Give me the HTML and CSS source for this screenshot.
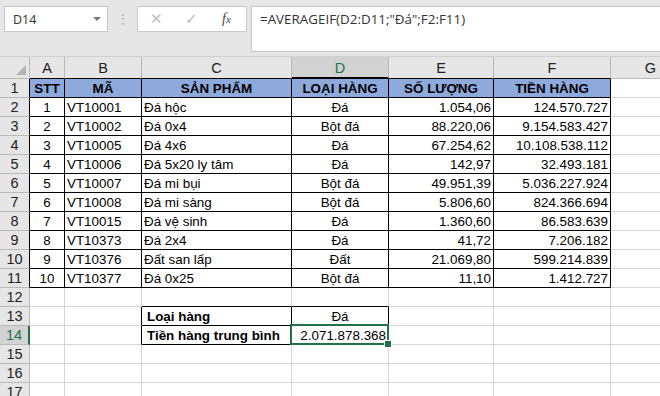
FILE: index.html
```html
<!DOCTYPE html>
<html lang="vi">
<head>
    <meta charset="UTF-8">
    <title>AVERAGEIF</title>
    <link rel="stylesheet" href="styles.css">
</head>
<body>
    <div class="formula-area">
        <div class="name-box">
            <span>D14</span>
            <span class="drop"></span>
        </div>
        <div class="grip">⋮</div>
        <div class="fx-box">
            <span class="btn">✕</span>
            <span class="btn">✓</span>
            <span class="fx"><i>f</i><i class="x">x</i></span>
        </div>
        <div class="formula-input">=AVERAGEIF(D2:D11;"Đá";F2:F11)</div>
    </div>

    <div class="sheet">
        <div class="row col-head">
            <div class="rh corner"><span class="tri"></span></div>
            <div class="c col-a edge">A</div>
            <div class="c col-b edge">B</div>
            <div class="c col-c edge">C</div>
            <div class="c col-d edge active">D</div>
            <div class="c col-e edge">E</div>
            <div class="c col-f edge">F</div>
            <div class="c col-g">G</div>
        </div>

        <div class="row head">
            <div class="rh edge">1</div>
            <div class="c col-a bd center">STT</div>
            <div class="c col-b bd center">MÃ</div>
            <div class="c col-c bd center">SẢN PHẨM</div>
            <div class="c col-d bd center">LOẠI HÀNG</div>
            <div class="c col-e bd center">SỐ LƯỢNG</div>
            <div class="c col-f bd center">TIỀN HÀNG</div>
            <div class="c col-g"></div>
        </div>
        <div class="row">
            <div class="rh edge">2</div>
            <div class="c col-a bd center">1</div>
            <div class="c col-b bd">VT10001</div>
            <div class="c col-c bd">Đá hộc</div>
            <div class="c col-d bd center">Đá</div>
            <div class="c col-e bd right">1.054,06</div>
            <div class="c col-f bd right">124.570.727</div>
            <div class="c col-g"></div>
        </div>
        <div class="row">
            <div class="rh edge">3</div>
            <div class="c col-a bd center">2</div>
            <div class="c col-b bd">VT10002</div>
            <div class="c col-c bd">Đá 0x4</div>
            <div class="c col-d bd center">Bột đá</div>
            <div class="c col-e bd right">88.220,06</div>
            <div class="c col-f bd right">9.154.583.427</div>
            <div class="c col-g"></div>
        </div>
        <div class="row">
            <div class="rh edge">4</div>
            <div class="c col-a bd center">3</div>
            <div class="c col-b bd">VT10005</div>
            <div class="c col-c bd">Đá 4x6</div>
            <div class="c col-d bd center">Đá</div>
            <div class="c col-e bd right">67.254,62</div>
            <div class="c col-f bd right">10.108.538.112</div>
            <div class="c col-g"></div>
        </div>
        <div class="row">
            <div class="rh edge">5</div>
            <div class="c col-a bd center">4</div>
            <div class="c col-b bd">VT10006</div>
            <div class="c col-c bd">Đá 5x20 ly tâm</div>
            <div class="c col-d bd center">Đá</div>
            <div class="c col-e bd right">142,97</div>
            <div class="c col-f bd right">32.493.181</div>
            <div class="c col-g"></div>
        </div>
        <div class="row">
            <div class="rh edge">6</div>
            <div class="c col-a bd center">5</div>
            <div class="c col-b bd">VT10007</div>
            <div class="c col-c bd">Đá mi bụi</div>
            <div class="c col-d bd center">Bột đá</div>
            <div class="c col-e bd right">49.951,39</div>
            <div class="c col-f bd right">5.036.227.924</div>
            <div class="c col-g"></div>
        </div>
        <div class="row">
            <div class="rh edge">7</div>
            <div class="c col-a bd center">6</div>
            <div class="c col-b bd">VT10008</div>
            <div class="c col-c bd">Đá mi sàng</div>
            <div class="c col-d bd center">Bột đá</div>
            <div class="c col-e bd right">5.806,60</div>
            <div class="c col-f bd right">824.366.694</div>
            <div class="c col-g"></div>
        </div>
        <div class="row">
            <div class="rh edge">8</div>
            <div class="c col-a bd center">7</div>
            <div class="c col-b bd">VT10015</div>
            <div class="c col-c bd">Đá vệ sinh</div>
            <div class="c col-d bd center">Đá</div>
            <div class="c col-e bd right">1.360,60</div>
            <div class="c col-f bd right">86.583.639</div>
            <div class="c col-g"></div>
        </div>
        <div class="row">
            <div class="rh edge">9</div>
            <div class="c col-a bd center">8</div>
            <div class="c col-b bd">VT10373</div>
            <div class="c col-c bd">Đá 2x4</div>
            <div class="c col-d bd center">Đá</div>
            <div class="c col-e bd right">41,72</div>
            <div class="c col-f bd right">7.206.182</div>
            <div class="c col-g"></div>
        </div>
        <div class="row">
            <div class="rh edge">10</div>
            <div class="c col-a bd center">9</div>
            <div class="c col-b bd">VT10376</div>
            <div class="c col-c bd">Đất san lấp</div>
            <div class="c col-d bd center">Đất</div>
            <div class="c col-e bd right">21.069,80</div>
            <div class="c col-f bd right">599.214.839</div>
            <div class="c col-g"></div>
        </div>
        <div class="row">
            <div class="rh edge">11</div>
            <div class="c col-a bd center">10</div>
            <div class="c col-b bd">VT10377</div>
            <div class="c col-c bd">Đá 0x25</div>
            <div class="c col-d bd center">Bột đá</div>
            <div class="c col-e bd right">11,10</div>
            <div class="c col-f bd right">1.412.727</div>
            <div class="c col-g"></div>
        </div>
        <div class="row">
            <div class="rh">12</div>
            <div class="c col-a"></div>
            <div class="c col-b"></div>
            <div class="c col-c bd-b"></div>
            <div class="c col-d bd-b"></div>
            <div class="c col-e"></div>
            <div class="c col-f"></div>
            <div class="c col-g"></div>
        </div>
        <div class="row">
            <div class="rh">13</div>
            <div class="c col-a"></div>
            <div class="c col-b bd-r"></div>
            <div class="c col-c bd bold">Loại hàng</div>
            <div class="c col-d bd center">Đá</div>
            <div class="c col-e"></div>
            <div class="c col-f"></div>
            <div class="c col-g"></div>
        </div>
        <div class="row">
            <div class="rh active">14</div>
            <div class="c col-a"></div>
            <div class="c col-b bd-r"></div>
            <div class="c col-c bd bold">Tiền hàng trung bình</div>
            <div class="c col-d bd right selected">2.071.878.368</div>
            <div class="c col-e"></div>
            <div class="c col-f"></div>
            <div class="c col-g"></div>
        </div>
        <div class="row">
            <div class="rh">15</div>
            <div class="c col-a"></div>
            <div class="c col-b"></div>
            <div class="c col-c"></div>
            <div class="c col-d"></div>
            <div class="c col-e"></div>
            <div class="c col-f"></div>
            <div class="c col-g"></div>
        </div>
        <div class="row">
            <div class="rh">16</div>
            <div class="c col-a"></div>
            <div class="c col-b"></div>
            <div class="c col-c"></div>
            <div class="c col-d"></div>
            <div class="c col-e"></div>
            <div class="c col-f"></div>
            <div class="c col-g"></div>
        </div>
        <div class="row">
            <div class="rh">17</div>
            <div class="c col-a"></div>
            <div class="c col-b"></div>
            <div class="c col-c"></div>
            <div class="c col-d"></div>
            <div class="c col-e"></div>
            <div class="c col-f"></div>
            <div class="c col-g"></div>
        </div>
    </div>
</body>
</html>
```

FILE: styles.css
```css
:root {
    --grid: #d4d4d4;
    --head-bg: #e6e6e6;
    --head-line: #bababa;
    --green: #217346;
}

* {
    margin: 0;
    padding: 0;
    box-sizing: border-box;
}

body {
    width: 660px;
    height: 396px;
    overflow: hidden;
    background: #fff;
    font-family: "Liberation Sans", Arial, sans-serif;
    font-size: 13.4px;
    color: #000;
}

/* formula bar */
.formula-area {
    height: 56px;
    background: var(--head-bg);
    display: flex;
    align-items: flex-start;
    padding-top: 6px;
    padding-left: 4px;
    font-family: "Open Sans", sans-serif;
    font-size: 13.4px;
    color: #333;
}

.name-box {
    width: 104px;
    height: 26px;
    background: #fff;
    border: 1px solid #c6c6c6;
    display: flex;
    align-items: center;
    justify-content: space-between;
    padding: 0 6px 0 8px;
    font-size: 12.5px;
}

.drop {
    width: 0;
    height: 0;
    border-left: 4px solid transparent;
    border-right: 4px solid transparent;
    border-top: 4px solid #777;
}

.grip {
    width: 29px;
    text-align: center;
    line-height: 26px;
    color: #b5b5b5;
    font-size: 14px;
}

.fx-box {
    width: 110px;
    height: 26px;
    background: #fff;
    border: 1px solid #c6c6c6;
    display: flex;
    align-items: center;
    padding-left: 12px;
}

.btn {
    width: 35px;
    color: #bdbdbd;
    font-size: 15px;
    font-family: "DejaVu Sans", sans-serif;
}

.fx {
    font-family: "Liberation Serif", serif;
    font-size: 14px;
    color: #444;
    margin-left: 2px;
}

.fx .x {
    font-size: 11px;
}

.formula-input {
    flex: 1;
    height: 46px;
    margin-left: 4px;
    background: #fff;
    border: 1px solid #c6c6c6;
    border-right: none;
    padding: 3px 8px;
    line-height: 18px;
}

/* grid */
.row {
    display: flex;
    height: 19px;
}

.rh,
.c {
    flex: none;
    border-right: 1px solid var(--grid);
    border-bottom: 1px solid var(--grid);
    line-height: 19px;
    white-space: nowrap;
    overflow: hidden;
}

.rh {
    width: 30px;
    background: var(--head-bg);
    border-color: var(--head-line);
    text-align: center;
    font-size: 14.5px;
    color: #222;
}

.c {
    padding: 0 2px;
}

.col-a { width: 35px; }
.col-b { width: 77px; }
.col-c { width: 150px; }
.col-d { width: 97px; }
.col-e { width: 105px; }
.col-f { width: 117px; }
.col-g { width: 80px; }

.col-head {
    height: 23px;
    border-top: 1px solid #d0d0d0;
}

.col-head .c {
    background: var(--head-bg);
    border-color: var(--head-line);
    text-align: center;
    font-size: 14.5px;
    line-height: 22px;
    color: #222;
}

.col-head .rh {
    position: relative;
    line-height: 22px;
}

.tri {
    position: absolute;
    right: 3px;
    bottom: 3px;
    width: 0;
    height: 0;
    border-left: 10px solid transparent;
    border-bottom: 10px solid #b4b4b4;
}

.col-head .c.active {
    background: #d2d2d2;
    color: var(--green);
    border-bottom: 2px solid var(--green);
}

.rh.active {
    background: #d2d2d2;
    color: var(--green);
    border-right: 2px solid var(--green);
}

.edge {
    border-bottom-color: #000 !important;
}

.rh.edge {
    border-bottom-color: var(--head-line) !important;
    border-right-color: #000;
}

.head .c {
    font-weight: bold;
}

.head .bd {
    background: #8ea9db;
}

.bd {
    border-right-color: #000;
    border-bottom-color: #000;
}

.bd-b { border-bottom-color: #000; }
.bd-r { border-right-color: #000; }

.center { text-align: center; }
.right { text-align: right; }
.bold { font-weight: bold; padding-left: 5px; }

.selected {
    position: relative;
    overflow: visible;
}

.selected::after {
    content: "";
    position: absolute;
    left: -2px;
    top: -2px;
    right: -1px;
    bottom: -1px;
    border: 2px solid var(--green);
}

.selected::before {
    content: "";
    position: absolute;
    right: -4px;
    bottom: -4px;
    width: 6px;
    height: 6px;
    background: var(--green);
    border: 1px solid #fff;
    z-index: 1;
}
```
